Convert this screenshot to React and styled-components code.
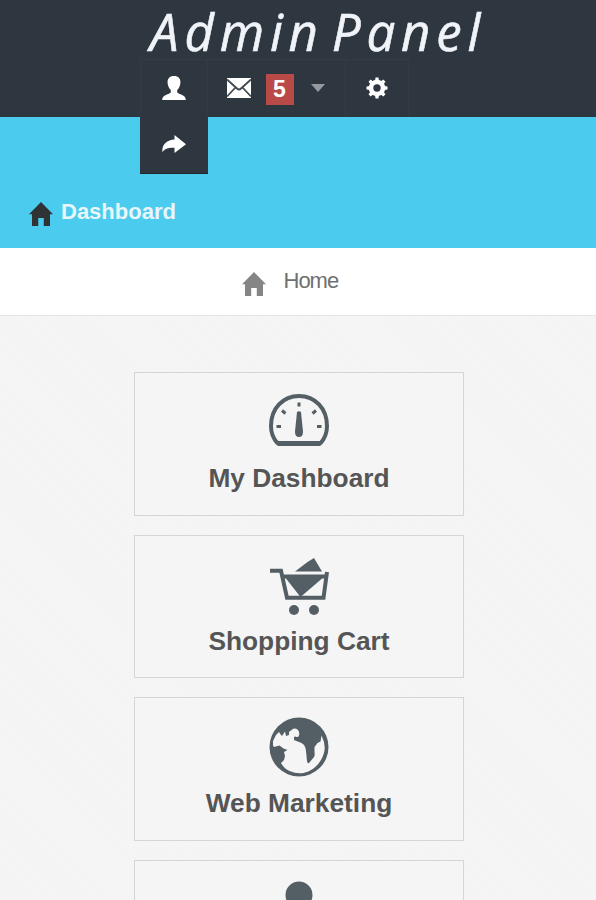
import styled, { createGlobalStyle } from "styled-components";

const GlobalStyle = createGlobalStyle`
  * {
    box-sizing: border-box;
  }
  body {
    margin: 0;
    background: #f5f5f5;
    font-family: "Liberation Sans", Arial, sans-serif;
  }
  svg {
    display: block;
    flex-shrink: 0;
  }
`;

const Header = styled.header`
  position: relative;
  z-index: 1;
  height: 117px;
  background: #2e363f;
`;

const Logo = styled.h1`
  margin: 0;
  height: 59px;
  padding-left: 150px;
  color: #f0f3f8;
  font-family: "Open Sans", "Noto Sans", sans-serif;
  font-size: 51px;
  font-style: italic;
  font-weight: 400;
  letter-spacing: 5.8px;
  line-height: 62px;
  word-spacing: -11px;
  white-space: nowrap;
  -webkit-text-stroke: 0.6px #f0f3f8;
`;

const UserNav = styled.nav`
  display: flex;
  flex-wrap: wrap;
  width: 272px;
  margin-left: 140px;
`;

const NavItem = styled.a`
  display: flex;
  align-items: center;
  justify-content: center;
  width: ${({ $width }) => $width}px;
  height: 58px;
  padding-bottom: 2px;
  border: solid #333b46;
  border-width: 1px 1px 0 0;
  color: #fff;

  &:first-child {
    border-left-width: 1px;
  }
  &:last-child {
    height: 57px;
    border: 0;
    border-bottom: 1px solid #20242b;
    background: #2e363f;
  }
`;

const Label = styled.span`
  width: 28px;
  margin: 3px 17px 0 15px;
  background: #b94a48;
  color: #fff;
  font-size: 23px;
  font-weight: 700;
  line-height: 31px;
  text-align: center;
`;

const Caret = styled.span`
  margin-right: 2px;
  border: 7px solid transparent;
  border-top: 8px solid #96999d;
  border-bottom: 0;
`;

const ContentHeader = styled.div`
  display: flex;
  align-items: flex-end;
  height: 131px;
  padding: 0 0 22px 29px;
  background: #4bcbee;
`;

const PageTitle = styled.h2`
  margin: 0 0 1px 8px;
  color: #e9f7fb;
  font-size: 22px;
  line-height: 26px;
`;

const Breadcrumb = styled.div`
  display: flex;
  align-items: flex-start;
  height: 68px;
  padding: 24px 0 0 242px;
  border-bottom: 1px solid #e4e6e6;
  background: #fff;
  color: #707070;
  font-size: 22px;
  letter-spacing: -1px;
  line-height: 24px;
`;

const Crumb = styled.span`
  margin: -3px 0 0 17.5px;
`;

const Tiles = styled.main`
  display: flex;
  flex-direction: column;
  align-items: center;
  gap: 19px;
  height: 584px;
  padding: 56px 0 0 2px;
  overflow: hidden;
  background: repeating-linear-gradient(45deg, #f4f4f4 0 2px, #f5f5f5 2px 4px);
`;

const Tile = styled.a`
  display: flex;
  flex-direction: column;
  align-items: center;
  flex-shrink: 0;
  width: 330px;
  height: 143.6px;
  padding-top: 19px;
  border: 1px solid #d3d5d6;
  background: #f5f5f5;
  color: #535e65;
`;

const TileTitle = styled.h3`
  margin: 10px 0 0;
  color: #555;
  font-size: 26.3px;
  line-height: 32px;
`;

const UserIcon = () => (
  <svg width="24" height="24" viewBox="0 0 24 24" fill="currentColor">
    <path d="M12 0C7.5 0 5.200 2.700 5.600 7c.3 3.200 1.500 5.400 3.200 7v2.500C7.500 18.300 0 18.600.2 24h23.600c.2-5.400-7.300-5.700-8.600-7.500V14c1.700-1.600 2.900-3.800 3.200-7C18.800 2.700 16.500 0 12 0Z" />
  </svg>
);

const MailIcon = () => (
  <svg width="24" height="20" viewBox="0 0 24 20">
    <path d="M0 0h24v20H0Z" fill="#fff" />
    <path
      d="M0 1.500 10 10.500q2 2 4 0l10-9M0 18.500 8.500 9.500M24 18.500l-8.500-9"
      fill="none"
      stroke="#414a52"
      strokeWidth="1.800"
    />
  </svg>
);

const CogIcon = () => (
  <svg width="22" height="22" viewBox="-11 -11 22 22">
    <g fill="currentColor">
      {[0, 45, 90, 135].map((angle) => (
        <path
          key={angle}
          d="M-1.500-10.500h3L3 0 1.500 10.500h-3L-3 0Z"
          transform={`rotate(${angle})`}
        />
      ))}
      <circle r="8.300" />
    </g>
    <circle r="3.700" fill="#2e363f" />
  </svg>
);

const ShareIcon = () => (
  <svg width="24" height="18" viewBox="0 0 24 18" fill="currentColor">
    <path d="M12.500 0 24 9.200 12.500 18v-5.200C6.500 12.500 3 13.500.5 17.200-.5 9.800 4.500 5 12.500 4.500Z" />
  </svg>
);

const HomeIcon = ({ color }) => (
  <svg width="24" height="24" viewBox="0 0 24 24" fill={color}>
    <path d="M12 0 0 12.200h3V24h6.200v-8h5.600v8H21V12.200h3Z" />
  </svg>
);

const GaugeIcon = () => (
  <svg width="60" height="60" viewBox="0 0 60 60">
    <path
      d="M8.800 51.500C4.500 47 2 40.500 2 34 2 16.500 14 4 30 4s28 12.500 28 30c0 6.500-2.500 13-6.800 17.500"
      fill="none"
      stroke="currentColor"
      strokeWidth="4"
    />
    <path d="M7 49h46l-1.500 5h-43Z" fill="currentColor" />
    <path d="m28 20-2 19.500q0 5.500 4 5.500t4-5.500L32 20q-2-1.500-4 0Z" fill="currentColor" />
    <path
      d="M30 10.500v4M13 18.500l3.500 3M47 18.500l-3.500 3M7.500 34.500h4.500M48 34.500h4.500"
      stroke="currentColor"
      strokeWidth="3"
    />
  </svg>
);

const CartIcon = () => (
  <svg width="60" height="60" viewBox="0 0 60 60">
    <g fill="none" stroke="currentColor" strokeWidth="4">
      <path d="M1 15.800h11L18 42.800h36.500L58 17" />
      <path d="M13 21.500h44" />
    </g>
    <g fill="currentColor">
      <path d="m26 16.500 12.500-9.500L45 3l8 13.500Z" />
      <path d="M15 21h41L31.500 42Z" />
      <circle cx="25" cy="55" r="5" />
      <circle cx="45" cy="55" r="5" />
    </g>
  </svg>
);

const GlobeIcon = () => (
  <svg width="60" height="60" viewBox="0 0 60 60">
    <circle cx="30" cy="30" r="29.500" fill="currentColor" />
    <path
      d="m4 24 3-6 3-3 2 3 1 1 3-4.500 1 4.500 3-1v-3l2.500-2q3-2.500 6-.5 2.500 2 1.500 6-1 2.500-3.500 1l-1.500.5v3l7.500 3q4 2 4.500 8l1 10q.5 3 2 2l5-6q1-1 .5-5v-5l3-4 3-1.500 1-6q4 8 3 15c-2 11-10 20-21 22.500q-7 1-14-2-6-3-8.500-8l3-3 1-4-1-4 3.500-2-4-1.500-4-3L5 30l-1-1.500Z"
      fill="#f5f5f5"
    />
  </svg>
);

const PersonIcon = () => (
  <svg width="60" height="60" viewBox="0 0 60 60" fill="currentColor">
    <circle cx="30" cy="15" r="13.500" />
    <path d="M6 60V48q0-16 24-16t24 16v12Z" />
  </svg>
);

const App = () => {
  return (
    <>
      <GlobalStyle />
      <Header>
        <Logo>Admin Panel</Logo>
        <UserNav>
          <NavItem $width={68}>
            <UserIcon />
          </NavItem>
          <NavItem $width={138}>
            <MailIcon />
            <Label>5</Label>
            <Caret />
          </NavItem>
          <NavItem $width={63}>
            <CogIcon />
          </NavItem>
          <NavItem $width={68}>
            <ShareIcon />
          </NavItem>
        </UserNav>
      </Header>

      <ContentHeader>
        <HomeIcon color="#2f3335" />
        <PageTitle>Dashboard</PageTitle>
      </ContentHeader>
      <Breadcrumb>
        <HomeIcon color="#858585" />
        <Crumb>Home</Crumb>
      </Breadcrumb>

      <Tiles>
        <Tile>
          <GaugeIcon />
          <TileTitle>My Dashboard</TileTitle>
        </Tile>
        <Tile>
          <CartIcon />
          <TileTitle>Shopping Cart</TileTitle>
        </Tile>
        <Tile>
          <GlobeIcon />
          <TileTitle>Web Marketing</TileTitle>
        </Tile>
        <Tile>
          <PersonIcon />
        </Tile>
      </Tiles>
    </>
  );
};

export default App;
